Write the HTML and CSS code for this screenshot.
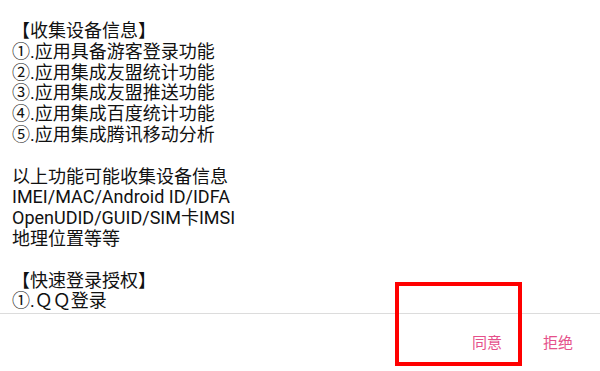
FILE: index.html
```html
<!DOCTYPE html>
<html>
<head>
<meta charset="utf-8">
<link rel="stylesheet" href="styles.css">
</head>
<body>
<div class="dialog">
  <div class="content">
    <div class="line">【收集设备信息】</div>
    <div class="line">①.应用具备游客登录功能</div>
    <div class="line">②.应用集成友盟统计功能</div>
    <div class="line">③.应用集成友盟推送功能</div>
    <div class="line">④.应用集成百度统计功能</div>
    <div class="line">⑤.应用集成腾讯移动分析</div>
    <div class="line">&nbsp;</div>
    <div class="line">以上功能可能收集设备信息</div>
    <div class="line">IMEI/MAC/Android ID/IDFA</div>
    <div class="line">OpenUDID/GUID/SIM卡IMSI</div>
    <div class="line">地理位置等等</div>
    <div class="line">&nbsp;</div>
    <div class="line">【快速登录授权】</div>
    <div class="line">①.ＱＱ登录</div>
  </div>
  <div class="actions">
    <span class="btn">同意</span>
    <span class="btn">拒绝</span>
  </div>
  <div class="highlight"></div>
</div>
</body>
</html>
```

FILE: styles.css
```css
html, body {
  margin: 0;
  padding: 0;
  background: #ffffff;
}
.dialog {
  position: relative;
  width: 600px;
  height: 371px;
  overflow: hidden;
  font-family: Roboto, "Noto Sans CJK SC", sans-serif;
  color: #111111;
}
.content {
  height: 292px;
  padding: 21px 0 0 12px;
  overflow: hidden;
  border-bottom: 1px solid #dcdcdc;
}
.line {
  font-size: 18px;
  line-height: 20.8px;
  white-space: nowrap;
}
.actions {
  display: flex;
  justify-content: flex-end;
  align-items: center;
  gap: 41px;
  height: 57px;
  padding-right: 27px;
}
.btn {
  font-size: 15px;
  color: #e5508a;
  line-height: 20px;
}
.highlight {
  position: absolute;
  left: 395px;
  top: 282px;
  width: 127px;
  height: 84px;
  border: 4px solid #ff0000;
  box-sizing: border-box;
}
```
